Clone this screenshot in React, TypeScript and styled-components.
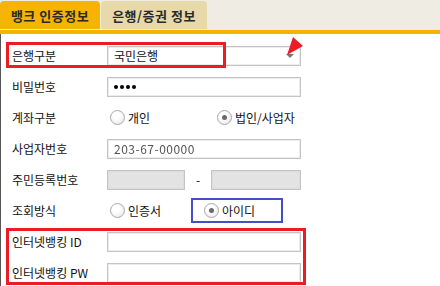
import styled, { createGlobalStyle } from "styled-components"

const Global = createGlobalStyle`
html, body {
  margin: 0;
  padding: 0;
  background: #fff;
}
body {
  font-family: "Noto Sans CJK KR", "Liberation Sans", sans-serif;
  font-size: 12px;
  color: #111;
}
`;

const Page = styled.div`
width: 440px;
height: 286px;
overflow: hidden;
`;

const TabBar = styled.div`
display: flex;
gap: 1px;
height: 29px;
padding-top: 1px;
box-sizing: border-box;
background: #efece3;
border-bottom: 4px solid #f5b400;
box-sizing: content-box;
`;

const Tab = styled.div<{ $active?: boolean; $w: number }>`
display: flex;
align-items: center;
justify-content: center;
width: ${(p) => p.$w}px;
height: 28px;
border-radius: 4px 4px 0 0;
background: ${(p) => (p.$active ? "#f5b400" : "#e8d9aa")};
color: #2a2a2a;
font-size: 13px;
font-weight: 700;
letter-spacing: 0.5px;
white-space: nowrap;
`;

const Content = styled.section`
position: relative;
height: 253px;
padding-top: 6px;
box-sizing: border-box;
border-left: 1px solid #555;
`;

const Row = styled.div`
display: flex;
align-items: center;
height: 31px;
`;

const Label = styled.div`
width: 95px;
padding-left: 11px;
white-space: nowrap;
`;

const Input = styled.div<{ $w?: number; $disabled?: boolean }>`
position: relative;
display: flex;
align-items: center;
width: ${(p) => p.$w ?? 194}px;
height: 20px;
padding-left: 6px;
box-sizing: border-box;
border: 1px solid #c4c4c4;
box-shadow: inset 0 0 0 1px ${(p) => (p.$disabled ? "#dcdcdc" : "#ececec")};
background: ${(p) => (p.$disabled ? "#e3e3e3" : "#fff")};
`;

const Caret = styled.span`
position: absolute;
right: 6px;
top: 7px;
width: 0;
height: 0;
border-left: 4px solid transparent;
border-right: 4px solid transparent;
border-top: 4px solid #777;
`;

const Dots = styled.span`
display: flex;
gap: 2px;
`;

const Dot = styled.span`
width: 4px;
height: 4px;
border-radius: 50%;
background: #000;
`;

const Blurred = styled.span`
color: #555;
filter: blur(0.6px);
letter-spacing: 0.5px;
`;

const Dash = styled.span`
width: 26px;
text-align: center;
`;

const Option = styled.label<{ $w?: number }>`
display: flex;
align-items: center;
gap: 3px;
width: ${(p) => (p.$w ? `${p.$w}px` : "auto")};
`;

const Radio = styled.span<{ $checked?: boolean }>`
display: inline-flex;
align-items: center;
justify-content: center;
width: 13px;
height: 13px;
border-radius: 50%;
border: 1px solid #a9a9a9;
background: radial-gradient(circle at 40% 35%, #ffffff 30%, #e2e2e2 100%);
&::after {
  content: "";
  display: ${(p) => (p.$checked ? "block" : "none")};
  width: 5px;
  height: 5px;
  border-radius: 50%;
  background: #6a6a6a;
}
`;

const Options = styled.div`
display: flex;
padding-left: 3px;
`;

const Mark = styled.div<{ $color: string; $x: number; $y: number; $w: number; $h: number; $b: number }>`
position: absolute;
left: ${(p) => p.$x}px;
top: ${(p) => p.$y}px;
width: ${(p) => p.$w}px;
height: ${(p) => p.$h}px;
box-sizing: border-box;
border: ${(p) => p.$b}px solid ${(p) => p.$color};
pointer-events: none;
`;

const Arrow = styled.svg`
position: absolute;
left: 283px;
top: 3px;
`;

export default function App() {
    return (
        <Page>
            <Global />
            <TabBar>
                <Tab $active $w={100}>뱅크 인증정보</Tab>
                <Tab $w={106}>은행/증권 정보</Tab>
            </TabBar>
            <Content>
                <Row>
                    <Label>은행구분</Label>
                    <Input>국민은행<Caret /></Input>
                </Row>
                <Row>
                    <Label>비밀번호</Label>
                    <Input><Dots><Dot /><Dot /><Dot /><Dot /></Dots></Input>
                </Row>
                <Row>
                    <Label>계좌구분</Label>
                    <Options>
                        <Option $w={107}><Radio />개인</Option>
                        <Option><Radio $checked />법인/사업자</Option>
                    </Options>
                </Row>
                <Row>
                    <Label>사업자번호</Label>
                    <Input><Blurred>203-67-00000</Blurred></Input>
                </Row>
                <Row>
                    <Label>주민등록번호</Label>
                    <Input $w={78} $disabled />
                    <Dash>-</Dash>
                    <Input $w={90} $disabled />
                </Row>
                <Row>
                    <Label>조회방식</Label>
                    <Options>
                        <Option $w={94}><Radio />인증서</Option>
                        <Option><Radio $checked />아이디</Option>
                    </Options>
                </Row>
                <Row>
                    <Label>인터넷뱅킹 ID</Label>
                    <Input />
                </Row>
                <Row>
                    <Label>인터넷뱅킹 PW</Label>
                    <Input />
                </Row>

                <Mark $color="#ec1c24" $x={5} $y={8} $w={220} $h={26} $b={3} />
                <Mark $color="#4350c8" $x={190} $y={164} $w={92} $h={25} $b={2} />
                <Mark $color="#ec1c24" $x={5} $y={194} $w={300} $h={57} $b={3} />
                <Arrow width="22" height="22" viewBox="0 0 22 22">
                    <polygon points="9,0 19,9 3,18" fill="#ec1c24" />
                </Arrow>
            </Content>
        </Page>
    );
}
